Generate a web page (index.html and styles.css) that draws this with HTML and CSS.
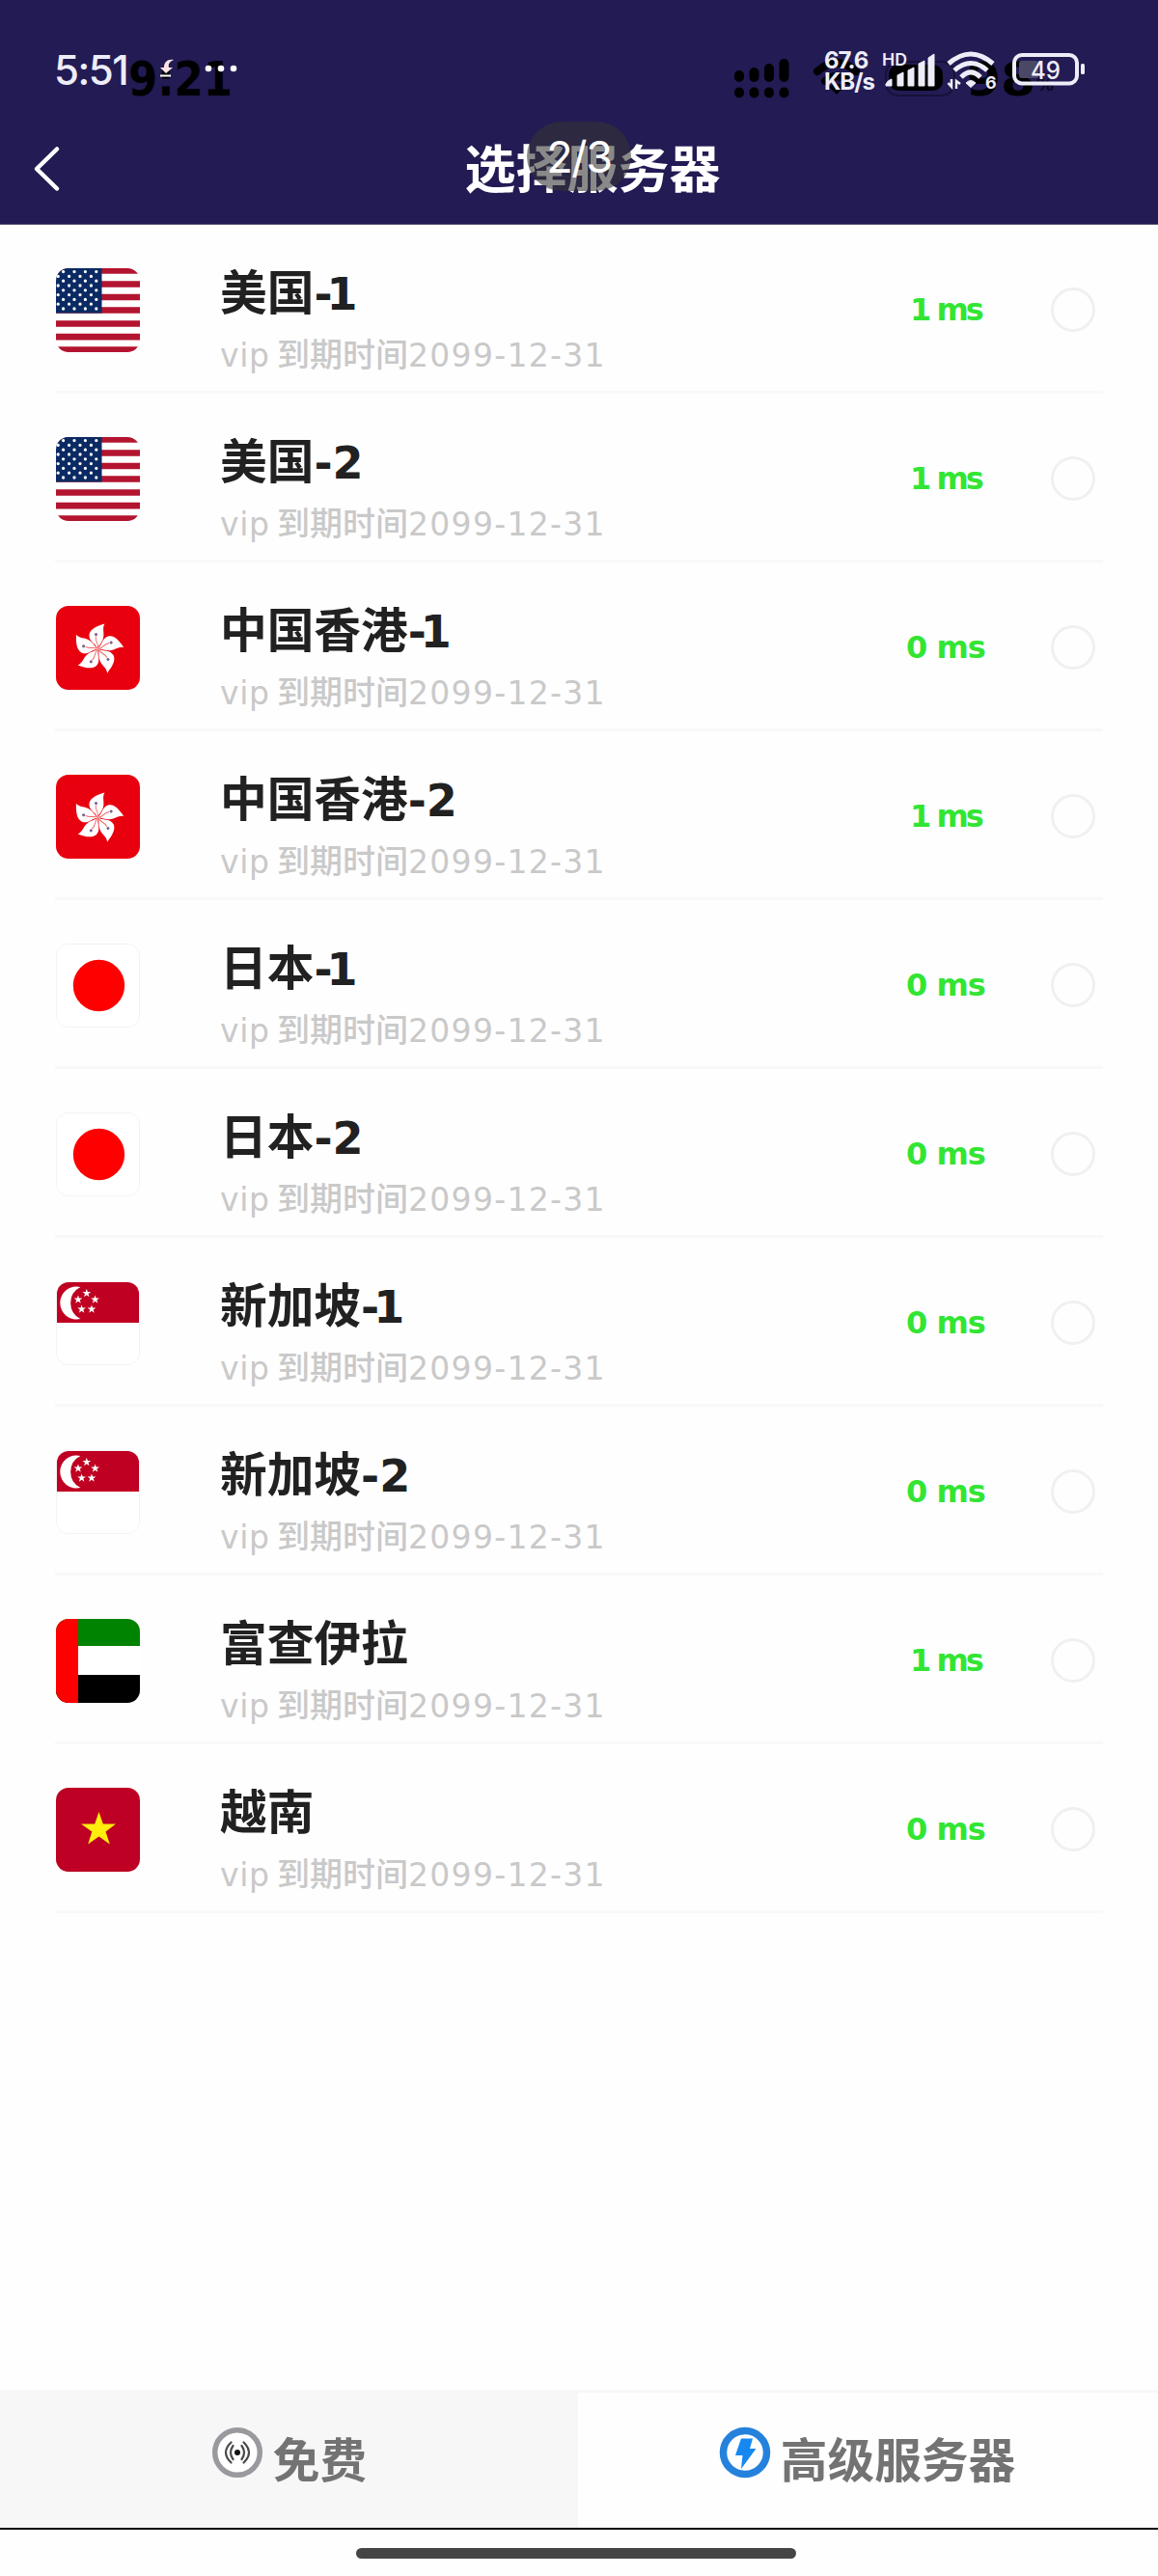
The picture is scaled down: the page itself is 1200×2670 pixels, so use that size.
FILE: index.html
```html
<!DOCTYPE html>
<html lang="zh-CN">
<head>
<meta charset="utf-8">
<title>选择服务器</title>
<link rel="stylesheet" href="styles.css">
</head>
<body>
<svg class="defs" width="0" height="0">
  <defs>
    <symbol id="us" viewBox="0 0 87 87">
      <rect width="87" height="87" fill="#fff"/>
      <path d="M0 2.5H87M0 16.5H87M0 30H87M0 43.5H87M0 57.5H87M0 71.2H87M0 84.5H87" stroke="#b3142f" stroke-width="6.7"/>
      <rect width="47.5" height="46.5" fill="#0b2a63"/>
      <g stroke="#fff" stroke-width="3.3" stroke-linecap="round" fill="none">
        <path stroke-dasharray="0 11.4" d="M7.6 3.6H43M7.6 13.2H43M7.6 22.8H43M7.6 32.4H43M7.6 42H43"/>
        <path stroke-dasharray="0 11.4" d="M2.2 8.4H38M2.2 18H38M2.2 27.6H38M2.2 37.2H38"/>
      </g>
    </symbol>
    <symbol id="hk" viewBox="0 0 87 87">
      <rect width="87" height="87" fill="#e9000f"/>
      <defs>
        <g id="petal">
          <path d="M0 0C-3-6-10-8-9-15C-8-21 0-24 7-26C4-21 7-17 5.500-11C4-6 1-4 0 0Z" fill="#fff"/>
          <path d="M0-1C1-5-3-7-2-13" fill="none" stroke="#e66" stroke-width="1"/>
          <circle cx="-2" cy="-15" r="1.500" fill="#765f91"/>
        </g>
      </defs>
      <g transform="translate(43.5 44.500)">
        <use href="#petal"/><use href="#petal" transform="rotate(72)"/><use href="#petal" transform="rotate(144)"/><use href="#petal" transform="rotate(216)"/><use href="#petal" transform="rotate(288)"/>
      </g>
    </symbol>
    <symbol id="jp" viewBox="0 0 87 87"><rect width="87" height="87" fill="#fff"/><circle cx="44.500" cy="43.500" r="27.300" fill="#fe0000"/></symbol>
    <symbol id="sg" viewBox="0 0 87 87">
      <rect width="87" height="87" fill="#fff"/><rect width="87" height="43" fill="#bf0022"/>
      <path d="M25 5A17.500 17.500 0 1 0 25 39A19 19 0 0 1 25 5Z" fill="#fff"/>
      <g fill="#fff">
        <path id="star" d="M31.500 7l1.100 3.200h3.400l-2.700 2 1 3.300-2.800-2-2.800 2 1-3.300-2.700-2h3.400z"/>
        <use href="#star" x="9" y="6.700"/><use href="#star" x="-9" y="6.700"/><use href="#star" x="5.300" y="17"/><use href="#star" x="-5.300" y="17"/>
      </g>
    </symbol>
    <symbol id="ae" viewBox="0 0 87 87"><rect width="87" height="87" fill="#fff"/><path d="M0 0H87V28H0Z" fill="#008300"/><path d="M0 58H87V87H0Z" fill="#000"/><path d="M0 0H23V87H0Z" fill="#fe0000"/></symbol>
    <symbol id="vn" viewBox="0 0 87 87"><rect width="87" height="87" fill="#bd0023"/><path d="M44.500 25L48.800 37.500H62L51.500 45.500L55.800 58.500L44.500 50.500L33.200 58.500L37.300 45.500L26 37.500H40.200Z" fill="#ffee0d"/></symbol>
  </defs>
</svg>
<div class="screen">
  <header class="header">
    <svg class="ghost" viewBox="0 0 1200 120" width="1200" height="120">
      <text x="133" y="99" font-size="49" font-weight="700" textLength="108" lengthAdjust="spacingAndGlyphs">9:21</text>
      <path d="M766 78V80M781.500 75V80M797 71V80M812.500 66V80M766 95.500V96.500M781.500 95.500V96.500M797 95.500V96.500M812.500 95.500V96.500" stroke="#000" stroke-width="10" stroke-linecap="round"/>
      <path d="M847 74Q867 56 887 74M855 84Q867 74 879 84" stroke="#000" stroke-width="8" fill="none" stroke-linecap="round"/>
      <path d="M859 90Q867 84 875 90L867 98Z"/>
      <rect x="918" y="64" width="71" height="35" rx="13" fill="none" stroke="#161238" stroke-width="2"/>
      <rect x="921" y="67" width="56" height="27" rx="10"/>
      <text x="1001" y="99" font-size="48" font-weight="700" textLength="72" lengthAdjust="spacingAndGlyphs">98</text>
      <text x="1074" y="94" font-size="18" font-weight="700" fill="#0b0820">%</text>
    </svg>
    <div class="status">
      <span class="time">5:51</span>
      <svg class="notice" viewBox="0 0 84 24" width="84" height="24">
        <path d="M15 2C9 1 5 4 5 10H1L7 16L14 10H10C9 6 11 4 15 2Z" fill="#ffe3e8"/><path d="M1 18.500H12" stroke="#fff" stroke-width="2"/>
        <g fill="#fff"><circle cx="51" cy="11" r="3.300"/><circle cx="64" cy="11" r="3.300"/><circle cx="77" cy="11" r="3.300"/></g>
      </svg>
      <div class="speed"><span>67.6</span><span>KB/s</span></div>
      <svg class="signal" viewBox="0 0 54 38" width="54" height="38">
        <text x="-1" y="14.500" font-size="17" font-weight="600" textLength="26" lengthAdjust="spacingAndGlyphs">HD</text>
        <path d="M3 36V34Q5 30 9 29V36ZM15 36V25L21 22V36ZM26 36V20L32 17V36ZM37 36V13L43 10V36ZM47 36V7L53 3V36Z" stroke="#ededf8" stroke-width="1" stroke-linejoin="round"/>
      </svg>
      <svg class="wifi" viewBox="0 0 52 42" width="52" height="42">
        <path d="M2 14Q25-6 48 14M8 21Q25 6 42 21M15 28Q25 18 35 28" fill="none" stroke="#ededf8" stroke-width="5"/>
        <path d="M20 34Q25 29 30 34L25 38.500Z" stroke="#ededf8" stroke-linejoin="round"/>
        <path d="M1.500 34L5 38V30M10 40V32L14 35" fill="none" stroke="#ededf8" stroke-width="2.500"/>
        <text x="40" y="40" font-size="18" font-weight="700">6</text>
      </svg>
      <svg class="battery" viewBox="0 0 77 36" width="77" height="36">
        <rect x="8" y="9" width="20" height="18" rx="3" fill="#4b4866"/>
        <rect x="3" y="3" width="65" height="29.500" rx="8" fill="none" stroke="#ededf8" stroke-width="4"/>
        <rect x="72" y="12" width="4" height="11" rx="1.500"/>
        <text x="20" y="27.500" font-size="26" font-weight="500" textLength="31" lengthAdjust="spacingAndGlyphs">49</text>
      </svg>
    </div>
    <div class="nav">
      <svg class="back" viewBox="0 0 30 48" width="30" height="48"><path d="M25 3.500L4 24L25 44.500" fill="none" stroke="#fff" stroke-width="4.500" stroke-linecap="round" stroke-linejoin="round"/></svg>
      <h1>选择服务器</h1>
    </div>
    <div class="pager">2/3</div>
  </header>
  <main class="list">
    <div class="row"><svg class="flag"><use href="#us"/></svg><div class="info"><h2>美国<b class="one">-1</b></h2><p><i class="vip">vip</i>到期时间<i>2099-12-31</i></p></div><span class="ping one">1 ms</span><span class="radio"></span></div>
    <div class="row"><svg class="flag"><use href="#us"/></svg><div class="info"><h2>美国<b>-2</b></h2><p><i class="vip">vip</i>到期时间<i>2099-12-31</i></p></div><span class="ping one">1 ms</span><span class="radio"></span></div>
    <div class="row"><svg class="flag"><use href="#hk"/></svg><div class="info"><h2>中国香港<b class="one">-1</b></h2><p><i class="vip">vip</i>到期时间<i>2099-12-31</i></p></div><span class="ping">0 ms</span><span class="radio"></span></div>
    <div class="row"><svg class="flag"><use href="#hk"/></svg><div class="info"><h2>中国香港<b>-2</b></h2><p><i class="vip">vip</i>到期时间<i>2099-12-31</i></p></div><span class="ping one">1 ms</span><span class="radio"></span></div>
    <div class="row"><svg class="flag pale"><use href="#jp"/></svg><div class="info"><h2>日本<b class="one">-1</b></h2><p><i class="vip">vip</i>到期时间<i>2099-12-31</i></p></div><span class="ping">0 ms</span><span class="radio"></span></div>
    <div class="row"><svg class="flag pale"><use href="#jp"/></svg><div class="info"><h2>日本<b>-2</b></h2><p><i class="vip">vip</i>到期时间<i>2099-12-31</i></p></div><span class="ping">0 ms</span><span class="radio"></span></div>
    <div class="row"><svg class="flag pale"><use href="#sg"/></svg><div class="info"><h2>新加坡<b class="one">-1</b></h2><p><i class="vip">vip</i>到期时间<i>2099-12-31</i></p></div><span class="ping">0 ms</span><span class="radio"></span></div>
    <div class="row"><svg class="flag pale"><use href="#sg"/></svg><div class="info"><h2>新加坡<b>-2</b></h2><p><i class="vip">vip</i>到期时间<i>2099-12-31</i></p></div><span class="ping">0 ms</span><span class="radio"></span></div>
    <div class="row"><svg class="flag"><use href="#ae"/></svg><div class="info"><h2>富查伊拉</h2><p><i class="vip">vip</i>到期时间<i>2099-12-31</i></p></div><span class="ping one">1 ms</span><span class="radio"></span></div>
    <div class="row"><svg class="flag"><use href="#vn"/></svg><div class="info"><h2>越南</h2><p><i class="vip">vip</i>到期时间<i>2099-12-31</i></p></div><span class="ping">0 ms</span><span class="radio"></span></div>
  </main>
  <nav class="tabs">
    <div class="tab free">
      <svg viewBox="0 0 54 54" width="54" height="54"><circle cx="27" cy="27" r="23.300" fill="#fff" stroke="#9a9a9e" stroke-width="5.500"/><circle cx="27" cy="27" r="3" fill="#111"/><path d="M22.500 20Q17.500 27 22.500 34M31.500 20Q36.500 27 31.500 34M20.500 16.500Q9.500 27 20.500 37.500M33.500 16.500Q44.500 27 33.500 37.500" fill="none" stroke="#4a4a4a" stroke-width="2.200" stroke-linecap="round"/></svg>
      <span>免费</span>
    </div>
    <div class="tab">
      <svg viewBox="0 0 54 54" width="54" height="54"><circle cx="27" cy="27" r="22.500" fill="#fff" stroke="#2582dc" stroke-width="7.500"/><path d="M23 12.500H35L32 23H38.500L23 44L24.500 30H17Z" fill="#1688f0"/></svg>
      <span>高级服务器</span>
    </div>
  </nav>
  <footer class="home"><span></span></footer>
</div>
</body>
</html>
```

FILE: styles.css
```css
* { box-sizing: border-box; margin: 0; padding: 0; }
body { background: #fefefe; font-family: "Noto Sans CJK SC", sans-serif; }
svg { display: block; flex: none; }
i { font-style: normal; }
.defs { position: absolute; }
.screen { width: 1200px; height: 2670px; display: flex; flex-direction: column; overflow: hidden; }

.header { position: relative; height: 233px; background: #221b54; border-bottom: 1px solid #55506f; color: #fff; }
.ghost { position: absolute; left: 0; top: 0; font-family: "DejaVu Sans", sans-serif; }
.status { position: relative; display: flex; align-items: flex-start; height: 137px; padding: 52px 0 0 56px; color: #ededf8; fill: #ededf8; font-family: Inter, sans-serif; }
.time { width: 109px; font-size: 42px; line-height: 42px; font-weight: 500; letter-spacing: -1.5px; }
.notice { margin-top: 8px; }
.speed { display: flex; flex-direction: column; width: 61px; margin-left: 605px; font-size: 24px; line-height: 22px; font-weight: 700; letter-spacing: -1px; }
.signal { margin-top: 1px; overflow: visible; }
.wifi { margin-left: 12px; overflow: visible; }
.battery { margin: 2px 0 0 15px; }
.nav { display: flex; align-items: center; height: 70px; padding-left: 34px; }
.back { margin-top: 6px; }
h1 { flex: 1; margin-right: 36px; text-align: center; font-size: 53px; line-height: 70px; font-weight: 700; }
.pager { position: absolute; left: 546px; top: 126px; width: 108px; height: 72px; border-radius: 36px; background: rgba(51, 51, 51, .58); font: 400 45px/74px Inter, sans-serif; letter-spacing: -1.3px; text-align: center; }

.list { flex: 1; padding: 0 57px; }
.row { display: flex; align-items: center; height: 175px; padding-top: 4px; border-bottom: 3px solid #f8f8f8; }
.flag { width: 87px; height: 87px; margin-left: 1px; border-radius: 13px; overflow: hidden; }
.pale { border: 1px solid #f2f2f2; }
.info { flex: 1; margin-left: 83px; padding-top: 17px; }
h2 { height: 73px; font-size: 48.7px; line-height: 68px; font-weight: 700; color: #212121; white-space: nowrap; }
h2 b { font-family: "DejaVu Sans", sans-serif; font-size: 46px; }
h2 .one { letter-spacing: -6px; }
p { height: 54px; font-size: 34px; line-height: 54px; color: #c9c9c9; white-space: nowrap; font-weight: 500; }
p i { font-family: "DejaVu Sans", sans-serif; font-weight: 400; font-size: 33px; letter-spacing: 1.3px; }
.vip { display: inline-block; width: 59px; letter-spacing: .6px; }
.ping { width: 110px; text-align: center; font: 700 32px/40px "DejaVu Sans", sans-serif; letter-spacing: -1px; color: #33e533; margin-right: 54px; }
.ping.one { letter-spacing: -3px; }
.radio { width: 46px; height: 46px; margin-right: 8px; border: 3px solid #f0f0f0; border-radius: 50%; }

.tabs { display: flex; height: 143px; border-top: 3px solid #f7f7f7; }
.tab { flex: 1; display: flex; align-items: center; justify-content: center; gap: 10px; padding: 0 2px 17px 0; color: #737373; font-size: 48.7px; line-height: 70px; font-weight: 700; }
.tab span { padding-top: 10px; }
.free { background: #f7f7f7; padding-right: 0; }
.home { height: 50px; border-top: 2px solid #08080c; padding-top: 19px; }
.home span { display: block; width: 456px; height: 11px; margin-left: 369px; border-radius: 6px; background: #454545; }
```
